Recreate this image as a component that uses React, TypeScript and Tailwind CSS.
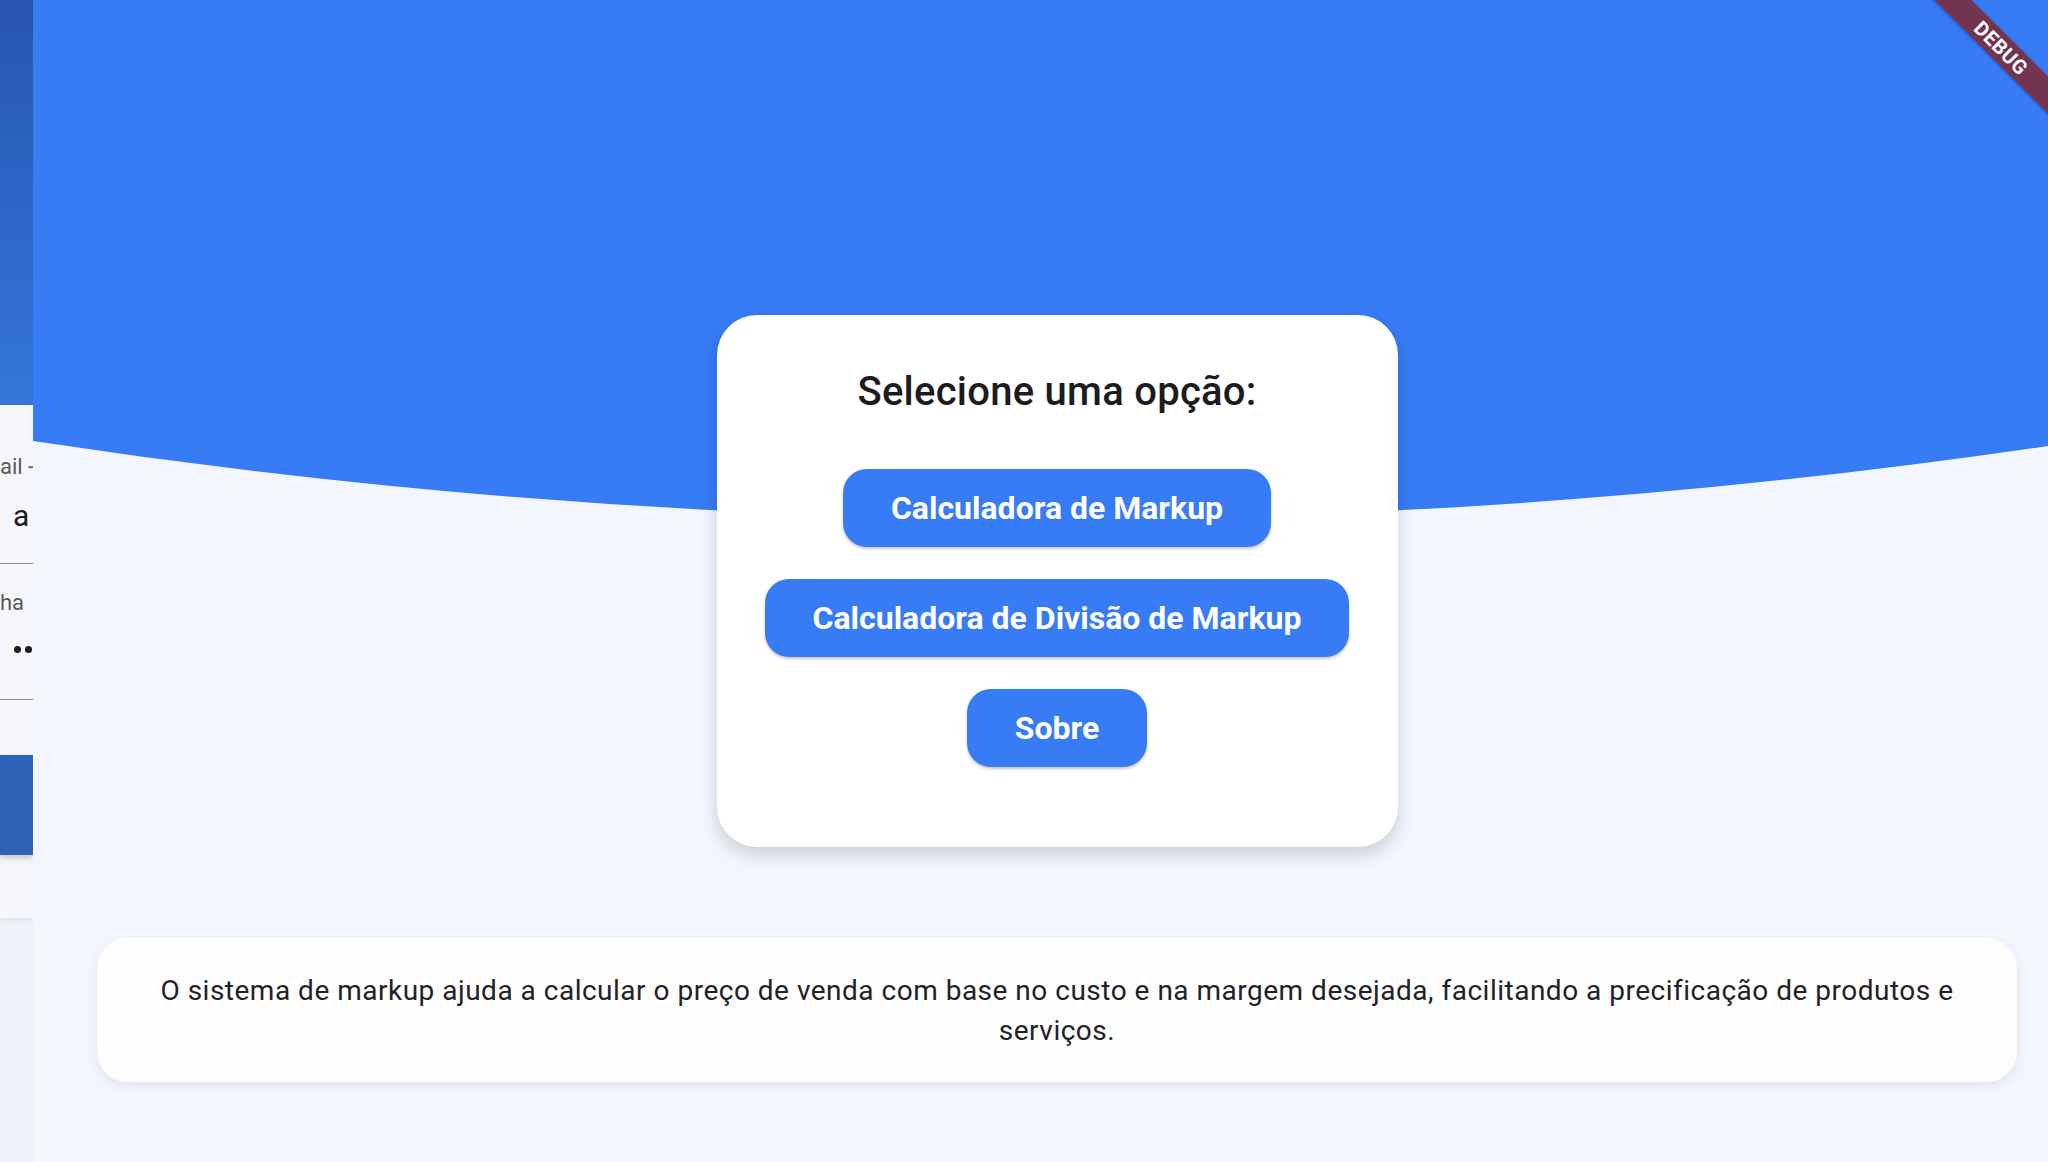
import type { ReactNode } from 'react'

const options = ['Calculadora de Markup', 'Calculadora de Divisão de Markup', 'Sobre']

function LoginPeek() {
  // what is left of the previous route while the new one slides in
  return (
    <div className="flex w-[33px] shrink-0 flex-col overflow-hidden bg-[#edf1f9] whitespace-nowrap">
      <div className="h-[405px] bg-gradient-to-b from-[#2756b0] to-[#3575da]" />
      <div className="flex h-[513px] flex-col bg-[#f6f7fa] shadow-[0_2px_6px_rgba(0,0,0,0.08)]">
        <div className="mt-[50px] h-[24px] text-[22px] leading-[24px] text-[#5a5a5a]">ail -</div>
        <div className="mt-[19px] h-[36px] pl-[13px] text-[30px] leading-[36px] text-[#1d1b20]">a</div>
        <div className="mt-[29px] h-px bg-[#8c8c8c]" />
        <div className="mt-[27px] h-[24px] text-[22px] leading-[24px] text-[#5a5a5a]">ha</div>
        <div className="mt-[29px] flex h-[10px] items-center gap-[4px] pl-[14px]">
          <span className="size-[7px] shrink-0 rounded-full bg-[#1d1b20]" />
          <span className="size-[7px] shrink-0 rounded-full bg-[#1d1b20]" />
          <span className="size-[7px] shrink-0 rounded-full bg-[#1d1b20]" />
        </div>
        <div className="mt-[45px] h-px bg-[#8c8c8c]" />
        <div className="mt-[55px] h-[100px] bg-[#2e62b7] shadow-[0_3px_6px_rgba(0,0,0,0.2)]" />
      </div>
    </div>
  )
}

function OptionButton({ children }: { children: ReactNode }) {
  return (
    <button className="rounded-[24px] bg-[#377bf5] px-12 py-[21px] text-[32px] leading-[36px] font-bold text-white shadow-[0_2px_3px_rgba(0,0,0,0.22)]">
      {children}
    </button>
  )
}

function HomePage() {
  return (
    <div className="grid w-[2048px] shrink-0 grid-cols-1 grid-rows-1">
      <div className="col-start-1 row-start-1 flex flex-col">
        <div className="h-[441px] bg-[#377bf5]" />
        <svg width="2048" height="78" viewBox="0 0 2048 78" className="block">
          <path d="M0 0 L2048 0 Q1024 156 0 0 Z" fill="#377bf5" />
        </svg>
      </div>

      <div className="col-start-1 row-start-1 flex flex-col items-center pt-[315px]">
        <div className="flex w-[681px] flex-col items-center rounded-[40px] bg-white px-12 pt-[53px] pb-[48px] shadow-[0_8px_18px_rgba(0,0,0,0.16)]">
          <h1 className="mb-[54px] text-[40px] leading-[47px] font-medium tracking-[0.25px] text-[#1d1b20]">
            Selecione uma opção:
          </h1>
          <div className="flex flex-col items-center gap-8 pb-8">
            {options.map((label) => (
              <OptionButton key={label}>{label}</OptionButton>
            ))}
          </div>
        </div>

        <div className="mt-[91px] self-stretch px-16">
          <div className="rounded-[30px] bg-[#fdfdfe] px-12 pt-[33px] pb-[31px] shadow-[0_4px_12px_rgba(0,0,0,0.08)]">
            <p className="text-center text-[28px] leading-[40px] tracking-[0.5px] text-[#222226]">
              O sistema de markup ajuda a calcular o preço de venda com base no custo e na margem desejada, facilitando a
              precificação de produtos e serviços.
            </p>
          </div>
        </div>
      </div>
    </div>
  )
}

function DebugBanner() {
  return (
    <div className="absolute top-[35px] left-[1901px] flex h-[26px] w-[200px] rotate-45 items-center justify-center bg-[#72354f] text-[20px] leading-none font-bold tracking-[0.5px] text-white shadow-[0_1px_4px_rgba(0,0,0,0.3)]">
      DEBUG
    </div>
  )
}

export default function App() {
  return (
    <div className="relative flex h-[1162px] w-[2048px] overflow-hidden bg-[#f3f6fe] font-['Roboto','Liberation_Sans',sans-serif]">
      <LoginPeek />
      <HomePage />
      <DebugBanner />
    </div>
  )
}
